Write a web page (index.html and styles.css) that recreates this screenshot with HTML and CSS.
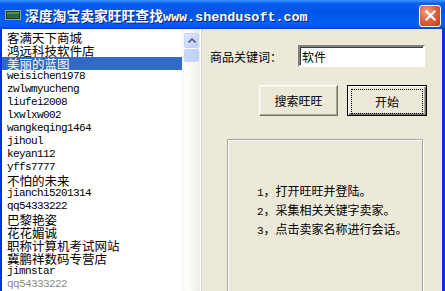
FILE: index.html
```html
<!doctype html>
<html lang="zh-CN">
<head>
    <meta charset="UTF-8">
    <title>深度淘宝卖家旺旺查找</title>
    <link rel="stylesheet" href="styles.css">
</head>
<body>
    <div class="window">
        <div class="titlebar">
            <svg class="app-icon" width="16" height="10" viewBox="0 0 16 10">
                <rect x="0.5" y="0.5" width="15" height="9" fill="#1f3f1f" stroke="#9aa39a"/>
                <rect x="2" y="2" width="12" height="6" fill="#2e6b33"/>
                <rect x="2" y="2" width="12" height="2" fill="#4f8f4f"/>
            </svg>
            <span class="title">深度淘宝卖家旺旺查找<span class="title-url">www.shendusoft.com</span></span>
            <button class="close-btn" aria-label="关闭">
                <svg width="11" height="11" viewBox="0 0 11 11">
                    <path d="M1.5 1.5 L9.5 9.5 M9.5 1.5 L1.5 9.5" stroke="#fff" stroke-width="2.2" stroke-linecap="square"/>
                </svg>
            </button>
        </div>

        <div class="content">
            <div class="listbox">
                <ul class="items">
                    <li>客满天下商城</li>
                    <li>鸿远科技软件店</li>
                    <li class="selected">美丽的蓝图</li>
                    <li class="en">weisichen1978</li>
                    <li class="en">zwlwmyucheng</li>
                    <li class="en">liufei2008</li>
                    <li class="en">lxwlxw002</li>
                    <li class="en">wangkeqing1464</li>
                    <li class="en">jihoul</li>
                    <li class="en">keyan112</li>
                    <li class="en">yffs7777</li>
                    <li>不怕的未来</li>
                    <li class="en">jianchi5201314</li>
                    <li class="en">qq54333222</li>
                    <li>巴黎艳姿</li>
                    <li>花花媚诚</li>
                    <li>职称计算机考试网站</li>
                    <li>冀鹏祥数码专营店</li>
                    <li class="en">jimnstar</li>
                    <li class="en faded">qq54333222</li>
                </ul>
                <div class="scrollbar">
                    <div class="sb-btn">
                        <svg width="8" height="5" viewBox="0 0 8 5">
                            <path d="M0.5 4.5 L4 1 L7.5 4.5" fill="none" stroke="#4d6185" stroke-width="1.6"/>
                        </svg>
                    </div>
                    <div class="sb-thumb"></div>
                </div>
            </div>

            <div class="panel">
                <div class="field">
                    <label class="field-label" for="keyword">商品关键词：</label>
                    <input class="field-input" id="keyword" type="text" value="软件">
                </div>
                <div class="buttons">
                    <button class="btn btn-search">搜索旺旺</button>
                    <button class="btn btn-start"><span class="focus">开始</span></button>
                </div>
                <div class="group">
                    <p><span class="num">1</span>，打开旺旺并登陆。</p>
                    <p><span class="num">2</span>，采集相关关键字卖家。</p>
                    <p><span class="num">3</span>，点击卖家名称进行会话。</p>
                </div>
            </div>
        </div>
    </div>
</body>
</html>
```

FILE: styles.css
```css
body {
    margin: 0;
    background-color: #ece9d8;
    font-family: "Noto Sans CJK SC", "Liberation Sans", sans-serif;
}
.window {
    width: 445px;
    height: 291px;
    display: flex;
    flex-direction: column;
    overflow: hidden;
    background-color: #ece9d8;
}
.titlebar {
    height: 29px;
    flex: none;
    display: flex;
    align-items: center;
    padding: 0 4px 0 5px;
    background: linear-gradient(#3d95ff 0, #0a5ff0 12%, #0055e5 40%, #0260f0 80%, #0a5ae0 92%, #0041c8 100%);
}
.app-icon {
    margin-top: 1px;
    flex: none;
}
.title {
    margin-left: 4px;
    color: #fff;
    font-family: "Noto Sans CJK SC", sans-serif;
    font-weight: bold;
    font-size: 13.8px;
    text-shadow: 1px 1px 0 #0a1f7d;
    white-space: nowrap;
    flex: 1;
}
.title-url {
    font-family: "Liberation Mono", monospace;
    font-size: 13.4px;
}
.close-btn {
    width: 22px;
    height: 22px;
    padding: 0;
    display: flex;
    align-items: center;
    justify-content: center;
    border: 1px solid #fff;
    border-radius: 3px;
    background: radial-gradient(circle at 35% 30%, #f3a68c 0, #e2603f 45%, #c6391c 100%);
    margin-top: 2px;
}
.content {
    flex: 1;
    display: flex;
    min-height: 0;
    border-left: 2px solid #0831d9;
    border-right: 3px solid #0831d9;
}
.listbox {
    width: 198px;
    flex: none;
    display: flex;
    background-color: #fff;
    border-right: 1px solid #fff;
}
.items {
    flex: 1;
    margin: 0;
    padding: 2px 0 0 0;
    list-style: none;
    overflow: hidden;
}
.items li {
    height: 13px;
    line-height: 13px;
    padding-left: 5px;
    font-size: 12.5px;
    color: #000;
    white-space: nowrap;
}
.items li.en {
    font-family: "Liberation Mono", monospace;
    font-size: 11px;
    letter-spacing: -0.6px;
}
.items li.selected {
    background-color: #316ac5;
    color: #fff;
}
.items li.faded {
    color: #8a8a8a;
}
.scrollbar {
    width: 16px;
    flex: none;
    padding: 4px 0 0 2px;
    background: linear-gradient(to right, #f7f7f4, #fdfdfb 30%, #eeede5);
}
.sb-btn {
    width: 13px;
    height: 13px;
    display: flex;
    align-items: center;
    justify-content: center;
    border: 1px solid #c3d3fd;
    border-radius: 2px;
    background: linear-gradient(135deg, #dfe8fe, #bccffb);
}
.sb-thumb {
    width: 13px;
    height: 11px;
    margin-top: 1px;
    border: 1px solid #c3d3fd;
    border-radius: 2px;
    background: linear-gradient(to right, #cad8fc, #bdcffa);
}
.panel {
    flex: 1;
    border-left: 1px solid #d8d5c6;
    padding: 16px 0 0 8px;
}
.field {
    display: flex;
    align-items: center;
}
.field-label {
    width: 88px;
    font-size: 12px;
    color: #000;
}
.field-input {
    width: 127px;
    height: 22px;
    box-sizing: border-box;
    margin: 0;
    padding: 0 2px;
    font-family: "Noto Sans CJK SC", sans-serif;
    font-size: 12px;
    border: 2px solid;
    border-color: #808080 #fff #fff #808080;
    box-shadow: inset 1px 1px 0 #404040;
    background-color: #fff;
    outline: none;
}
.buttons {
    display: flex;
    gap: 9px;
    margin-top: 18px;
    padding-left: 49px;
}
.btn {
    height: 31px;
    padding: 0;
    font-family: "Noto Sans CJK SC", sans-serif;
    font-size: 12px;
    color: #000;
    background-color: #ece9d8;
    border: 1px solid;
    border-color: #fff #716f64 #716f64 #fff;
    box-shadow: inset -1px -1px 0 #aca899, inset 1px 1px 0 #f1efe2;
}
.btn-search {
    width: 79px;
}
.btn-start {
    width: 80px;
    border-color: #000;
    box-shadow: inset 1px 1px 0 #fff, inset -1px -1px 0 #716f64, inset -2px -2px 0 #aca899;
}
.btn-start .focus {
    display: flex;
    align-items: center;
    justify-content: center;
    margin: 3px;
    height: 23px;
    border: 1px dotted #000;
}
.group {
    margin: 23px 0 0 17px;
    width: 196px;
    height: 160px;
    padding: 41px 0 0 29px;
    box-sizing: border-box;
    border: 1px solid #aca899;
    box-shadow: 1px 1px 0 #fff, inset 1px 1px 0 #fff;
}
.group p {
    margin: 0;
    height: 19px;
    line-height: 19px;
    font-size: 12px;
    color: #000;
    white-space: nowrap;
}
.group .num {
    font-family: "Liberation Mono", monospace;
    font-size: 11px;
}
```
